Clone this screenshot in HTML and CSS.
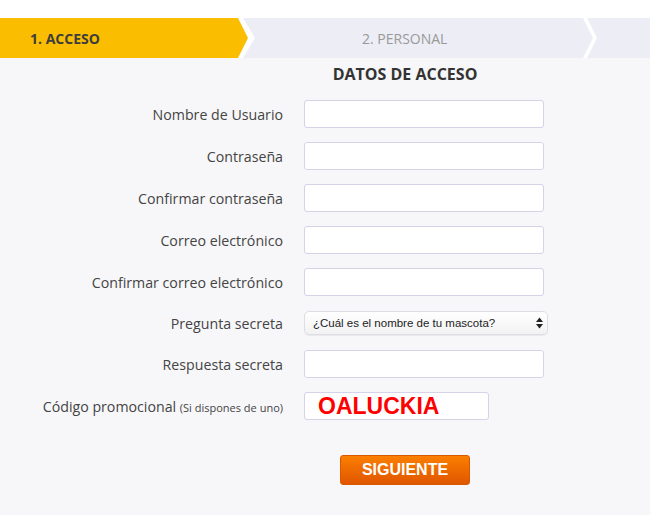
FILE: index.html
```html
<!DOCTYPE html>
<html lang="es">
<head>
  <meta charset="UTF-8">
  <meta name="viewport" content="width=device-width, initial-scale=1.0">
  <title>Registro - Datos de acceso</title>
  <link rel="stylesheet" href="styles.css">
</head>
<body>
  <!-- pasos del registro -->
  <div class="steps">
    <div class="step step-active">1. ACCESO</div>
    <svg class="sep" width="18" height="40" viewBox="0 0 18 40">
      <rect width="18" height="40" fill="#ededf5"/>
      <polygon points="0,0 5,0 17,20 5,40 0,40" fill="#fff"/>
      <polygon points="0,0 10,20 0,40" fill="#fbbd00"/>
    </svg>
    <div class="step step-next">2. PERSONAL</div>
    <svg class="sep" width="16" height="40" viewBox="0 0 16 40">
      <rect width="16" height="40" fill="#ededf5"/>
      <polygon points="0,0 4,0 14,20 4,40 0,40 10,20" fill="#fff"/>
    </svg>
    <div class="step step-rest"></div>
  </div>

  <div class="content">
    <h2 class="title">DATOS DE ACCESO</h2>

    <form class="form">
      <label for="usuario">Nombre de Usuario</label>
      <input type="text" id="usuario">

      <label for="pass">Contraseña</label>
      <input type="password" id="pass">

      <label for="pass2">Confirmar contraseña</label>
      <input type="password" id="pass2">

      <label for="email">Correo electrónico</label>
      <input type="text" id="email">

      <label for="email2">Confirmar correo electrónico</label>
      <input type="text" id="email2">

      <label for="pregunta">Pregunta secreta</label>
      <div class="select-wrap">
        <select id="pregunta">
          <option>¿Cuál es el nombre de tu mascota?</option>
        </select>
        <svg class="select-arrows" width="7" height="12" viewBox="0 0 7 12">
          <polygon points="3.5,0.5 7,5 0,5" fill="#222"/>
          <polygon points="0,7 7,7 3.5,11.5" fill="#222"/>
        </svg>
      </div>

      <label for="respuesta">Respuesta secreta</label>
      <input type="text" id="respuesta">

      <label for="promo">Código promocional <small>(Si dispones de uno)</small></label>
      <input type="text" id="promo" class="promo" value="OALUCKIA">
    </form>

    <div class="actions">
      <button class="btn" type="button">SIGUIENTE</button>
    </div>
  </div>
</body>
</html>
```

FILE: styles.css
```css
body {
  margin: 0;
  font-family: "Open Sans", "Liberation Sans", Arial, sans-serif;
  font-size: 14px;
  color: #444;
  background: #f7f7f9;
}
.steps {
  display: flex;
  height: 40px;
  border-top: 18px solid #fff;
  box-sizing: content-box;
  background: #ededf5;
}
.step {
  display: flex;
  align-items: center;
  height: 40px;
  font-size: 14px;
}
.sep {
  display: block;
  flex: none;
}
.step-active {
  width: 208px;
  padding-left: 30px;
  background: #fbbd00;
  color: #3d3d3d;
  font-weight: bold;
}
.step-next {
  width: 221px;
  padding-left: 106px;
  color: #999;
}
.step-rest {
  flex: 1;
}
.title {
  margin: 5px 0 0 160px;
  text-align: center;
  font-size: 16px;
  font-weight: bold;
  color: #333;
  line-height: 22px;
}
.form {
  display: grid;
  grid-template-columns: 283px 240px;
  column-gap: 21px;
  row-gap: 14px;
  align-items: center;
  margin-top: 15px;
}
.form label {
  text-align: right;
  white-space: nowrap;
  font-size: 14.2px;
}
.form small {
  font-size: 11px;
}
.form input {
  box-sizing: border-box;
  width: 240px;
  height: 28px;
  margin: 0;
  border: 1px solid #d6d3e8;
  border-radius: 3px;
  background: #fff;
  padding: 0 8px;
  font-family: inherit;
  font-size: 14px;
}
.form input.promo {
  width: 185px;
  padding-left: 13px;
  color: #f00;
  font-family: "Liberation Sans", Arial, sans-serif;
  font-weight: bold;
  font-size: 23px;
}
.select-wrap {
  position: relative;
  width: 244px;
  height: 26px;
}
.select-wrap select {
  -webkit-appearance: none;
  appearance: none;
  display: block;
  box-sizing: border-box;
  width: 244px;
  height: 24px;
  margin: 1px 0 0;
  padding: 0 20px 0 8px;
  border: 1px solid #dedde4;
  border-radius: 5px;
  background: linear-gradient(#fff, #f2f2f4);
  box-shadow: 0 1px 1px rgba(0, 0, 0, 0.06);
  font-family: "Liberation Sans", Arial, sans-serif;
  font-size: 11.5px;
  color: #222;
}
.select-arrows {
  position: absolute;
  right: 5px;
  top: 7px;
}
.actions {
  margin: 35px 0 0 160px;
  text-align: center;
}
.btn {
  width: 130px;
  height: 30px;
  border: 1px solid #d85800;
  border-radius: 3px;
  background: linear-gradient(#fb7f00, #e05600);
  color: #fff;
  font-family: "Liberation Sans", Arial, sans-serif;
  font-weight: bold;
  font-size: 16px;
  padding: 0;
  cursor: pointer;
}
```
